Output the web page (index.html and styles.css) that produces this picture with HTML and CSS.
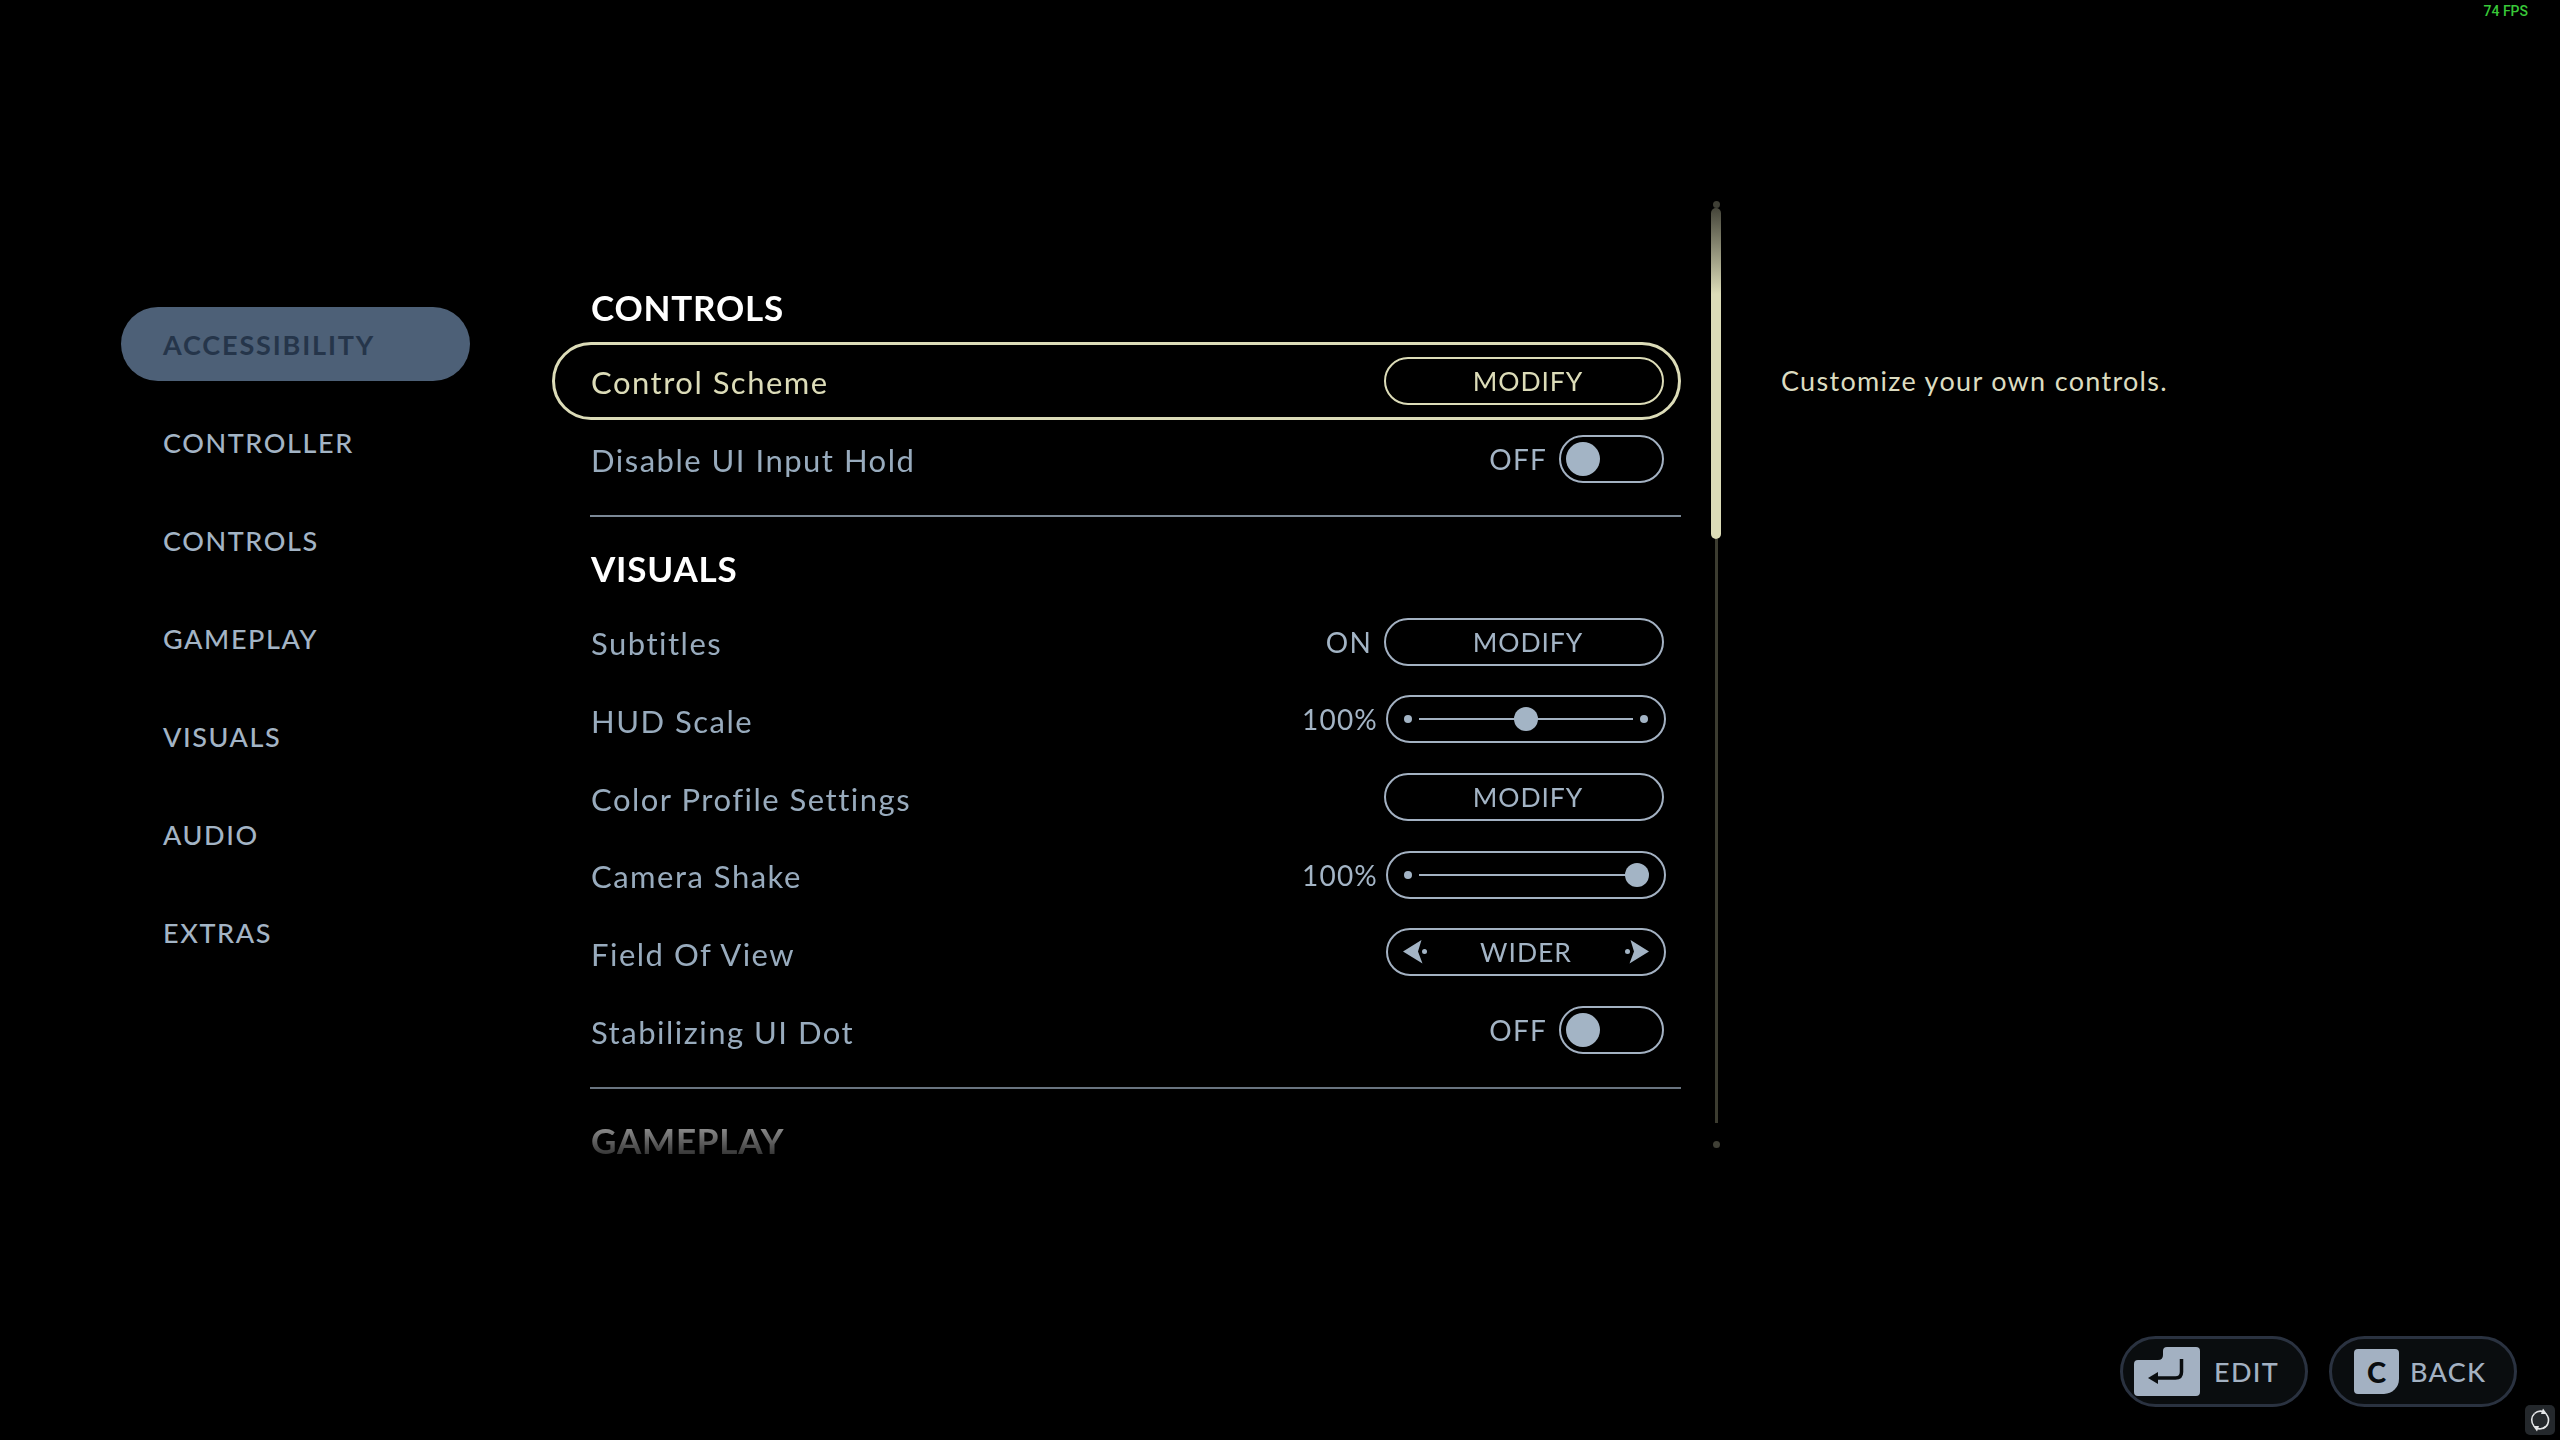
FILE: index.html
```html
<!DOCTYPE html>
<html lang="en">
<head>
<meta charset="utf-8">
<title>Settings</title>
<link rel="stylesheet" href="styles.css">
</head>
<body>
<div class="screen">
  <header class="topbar"><span class="fps">74 FPS</span></header>
  <main class="main">
    <nav class="sidebar">
      <div class="nav-item active">ACCESSIBILITY</div>
      <div class="nav-item">CONTROLLER</div>
      <div class="nav-item">CONTROLS</div>
      <div class="nav-item">GAMEPLAY</div>
      <div class="nav-item">VISUALS</div>
      <div class="nav-item">AUDIO</div>
      <div class="nav-item">EXTRAS</div>
    </nav>
    <section class="list">
      <h2 class="heading">CONTROLS</h2>
      <div class="row focus">
        <span class="label">Control Scheme</span>
        <div class="control"><div class="btn">MODIFY</div></div>
      </div>
      <div class="row">
        <span class="label">Disable UI Input Hold</span>
        <div class="control"><span class="val">OFF</span><div class="toggle"><span class="knob"></span></div></div>
      </div>
      <hr class="divider">
      <h2 class="heading">VISUALS</h2>
      <div class="row">
        <span class="label">Subtitles</span>
        <div class="control"><span class="val">ON</span><div class="btn">MODIFY</div></div>
      </div>
      <div class="row">
        <span class="label">HUD Scale</span>
        <div class="control"><span class="val">100%</span>
          <div class="slider"><span class="dot"></span><span class="track"><span class="thumb" style="left:50%"></span></span><span class="dot"></span></div>
        </div>
      </div>
      <div class="row">
        <span class="label">Color Profile Settings</span>
        <div class="control"><div class="btn">MODIFY</div></div>
      </div>
      <div class="row">
        <span class="label">Camera Shake</span>
        <div class="control"><span class="val">100%</span>
          <div class="slider"><span class="dot"></span><span class="track"><span class="thumb" style="left:102%"></span></span><span class="dot"></span></div>
        </div>
      </div>
      <div class="row">
        <span class="label">Field Of View</span>
        <div class="control">
          <div class="picker">
            <svg class="arrow" viewBox="0 0 24 24"><path d="M0 11.5 18.500 0 15 11.5 19.500 23.500Z"/><circle cx="21.5" cy="11.5" r="2.5"/></svg>
            <span class="picker-value">WIDER</span>
            <svg class="arrow" viewBox="0 0 24 24"><path d="M24 11.5 5.500 0 9 11.5 4.500 23.500Z"/><circle cx="2.500" cy="11.5" r="2.500"/></svg>
          </div>
        </div>
      </div>
      <div class="row">
        <span class="label">Stabilizing UI Dot</span>
        <div class="control"><span class="val">OFF</span><div class="toggle"><span class="knob"></span></div></div>
      </div>
      <hr class="divider">
      <h2 class="heading">GAMEPLAY</h2>
    </section>
    <aside class="scrollbar">
      <span class="end-dot"></span>
      <span class="scroll-thumb"></span>
      <span class="scroll-track"></span>
      <span class="end-dot bottom"></span>
    </aside>
    <p class="description">Customize your own controls.</p>
  </main>
  <footer class="footer">
    <div class="action">
      <svg class="enter-key" viewBox="0 0 66 49">
        <path class="key-fill" d="M33 0H62Q66 0 66 4V45Q66 49 62 49H4Q0 49 0 45V17Q0 13 4 13H24Q29 13 29 8V4Q29 0 33 0Z"/>
        <path class="key-line" d="M47.500 12V25Q47.500 31 41.500 31H22"/>
        <path class="key-head" d="M14 31 24 25V37Z"/>
      </svg>
      <span>EDIT</span>
    </div>
    <div class="action">
      <span class="c-key">C</span>
      <span>BACK</span>
    </div>
  </footer>
  <div class="sync">
    <svg viewBox="0 0 30 30"><path class="sync-line" d="M9.500 8.500A9 9 0 0 1 19 7"/><path class="sync-line" d="M21 9A9 9 0 0 1 18 23.500"/><path class="sync-line" d="M20.500 21.500A9 9 0 0 1 11 23"/><path class="sync-line" d="M9 21A9 9 0 0 1 9.500 8.500"/><path class="sync-head" d="M22 9 16 9 18 3.500Z"/><path class="sync-head" d="M8 21 14 21 12 26.500Z"/></svg>
  </div>
</div>
</body>
</html>
```
FILE: styles.css
```css
* { box-sizing: border-box; }
html, body { margin: 0; background: #000; }
.screen {
  position: relative;
  width: 2560px;
  height: 1440px;
  overflow: hidden;
  background: #000;
  display: flex;
  flex-direction: column;
  font-family: "Lato", "Liberation Sans", sans-serif;
  color: #a3b4c5;
}
.topbar {
  height: 200px;
  display: flex;
  justify-content: flex-end;
  align-items: flex-start;
  padding: 3px 32px 0 0;
}
.fps {
  font-family: "Roboto", sans-serif;
  font-size: 14px;
  line-height: 17px;
  font-weight: 500;
  color: #38c838;
}
.main {
  height: 960px;
  display: flex;
  align-items: flex-start;
  padding-left: 121px;
}
.sidebar {
  width: 349px;
  margin: 107px 82px 0 0;
  display: flex;
  flex-direction: column;
  gap: 24px;
}
.nav-item {
  height: 74px;
  border-radius: 37px;
  padding-left: 42px;
  display: flex;
  align-items: center;
  font-size: 27px;
  font-weight: 500;
  letter-spacing: 1.6px;
  color: #a3b4c5;
}
.nav-item.active {
  background: #4d6077;
  color: #25354a;
  font-weight: 700;
  letter-spacing: 1.85px;
}
.list {
  width: 1129px;
  height: 960px;
  padding-top: 74.5px;
  overflow: hidden;
  -webkit-mask-image: linear-gradient(to bottom, #000 0, #000 860px, rgba(0,0,0,.85) 888px, rgba(0,0,0,.55) 928px, rgba(0,0,0,.22) 954px, transparent 965px);
  mask-image: linear-gradient(to bottom, #000 0, #000 860px, rgba(0,0,0,.85) 888px, rgba(0,0,0,.55) 928px, rgba(0,0,0,.22) 954px, transparent 965px);
}
.heading {
  margin: 0;
  height: 67.5px;
  display: flex;
  align-items: center;
  padding: 0 0 2px 39px;
  font-size: 35px;
  font-weight: 700;
  letter-spacing: 0.8px;
  color: #fff;
}
.row {
  height: 77.7px;
  display: flex;
  align-items: center;
  justify-content: space-between;
  padding: 0 14px 0 36px;
  border: 3px solid transparent;
  border-radius: 39px;
  font-size: 31px;
}
.row.focus {
  border-color: #dcdcb8;
  color: #dcdcb8;
}
.label {
  padding-top: 3px;
  letter-spacing: 1.5px;
  color: #98abbd;
}
.focus .label { color: #dcdcb8; }
.control {
  display: flex;
  align-items: center;
  gap: 12px;
}
.val {
  font-size: 28px;
  letter-spacing: 1.2px;
}
.btn {
  width: 280px;
  height: 48px;
  border: 2px solid #a3b1c2;
  border-radius: 24px;
  display: flex;
  align-items: center;
  justify-content: center;
  padding-left: 8px;
  font-size: 26.5px;
  letter-spacing: 0.9px;
}
.focus .btn { border-color: #dcdcb8; color: #dcdcb8; }
.toggle {
  width: 105px;
  height: 48px;
  border: 2px solid #a3b1c2;
  border-radius: 24px;
  display: flex;
  align-items: center;
  padding-left: 5px;
}
.knob {
  width: 34px;
  height: 34px;
  border-radius: 50%;
  background: #a3b4c5;
}
.slider {
  width: 280px;
  height: 48px;
  margin: 0 -2px 0 -4px;
  border: 2px solid #a3b1c2;
  border-radius: 24px;
  display: flex;
  align-items: center;
  gap: 7px;
  padding: 0 16px;
}
.dot {
  width: 8px;
  height: 8px;
  border-radius: 50%;
  background: #a3b4c5;
  flex: none;
}
.track {
  position: relative;
  flex: 1;
  height: 2px;
  background: #a3b1c2;
}
.thumb {
  position: absolute;
  top: 50%;
  width: 24px;
  height: 24px;
  border-radius: 50%;
  background: #a3b4c5;
  transform: translate(-50%, -50%);
}
.picker {
  width: 280px;
  height: 48px;
  margin: 0 -2px 0 0;
  border: 2px solid #a3b1c2;
  border-radius: 24px;
  display: flex;
  align-items: center;
  justify-content: space-between;
  padding: 0 15px;
  font-size: 26.5px;
  letter-spacing: 1px;
}
.arrow {
  width: 24px;
  height: 24px;
  fill: #a3b4c5;
}
.divider {
  margin: 18px 0 18px 38px;
  height: 2px;
  border: 0;
  background: #7b8896;
}
.scrollbar {
  position: relative;
  width: 10px;
  height: 960px;
  margin-left: 30px;
  padding-top: 8px;
  display: flex;
  flex-direction: column;
  align-items: center;
}
.end-dot {
  position: absolute;
  top: 1px;
  width: 7px;
  height: 7px;
  border-radius: 50%;
  background: #3f3f35;
}
.end-dot.bottom { top: 941px; }
.scroll-thumb {
  width: 10px;
  height: 331px;
  flex: none;
  border-radius: 5px;
  background: linear-gradient(to bottom, #45453a 0, #dcdcb8 26%, #dcdcb8 100%);
}
.scroll-track {
  width: 3px;
  height: 584px;
  flex: none;
  background: #3c3c30;
}
.description {
  margin: 162px 0 0 60px;
  font-size: 27px;
  line-height: 38px;
  letter-spacing: 1.3px;
  color: #dcdcc0;
}
.footer {
  margin-top: 176px;
  display: flex;
  justify-content: flex-end;
  gap: 21px;
  padding-right: 43px;
}
.action {
  width: 188px;
  height: 71px;
  background: #0a0d0f;
  border: 3px solid #2a3240;
  border-radius: 36px;
  display: flex;
  align-items: center;
  font-size: 27px;
  font-weight: 500;
  letter-spacing: 1.3px;
  color: #a3b1c2;
}
.enter-key {
  width: 66px;
  height: 49px;
  margin: 0 14px 0 11px;
}
.key-fill { fill: #a3b1c2; }
.key-line { fill: none; stroke: #0a0d0f; stroke-width: 3.5px; }
.key-head { fill: #0a0d0f; }
.c-key {
  width: 45px;
  height: 45px;
  margin: 0 11px 0 22px;
  background: #a3b1c2;
  border-radius: 4px 4px 15px 4px;
  display: flex;
  align-items: center;
  justify-content: center;
  font-size: 29px;
  font-weight: 900;
  letter-spacing: 0;
  color: #0a0d0f;
}
.sync {
  position: absolute;
  left: 2525px;
  top: 1405px;
  width: 30px;
  height: 30px;
  border-radius: 5px;
  background: #24282c;
}
.sync svg { display: block; width: 30px; height: 30px; }
.sync-line { fill: none; stroke: #e4e6e8; stroke-width: 1.6px; }
.sync-head { fill: #e4e6e8; }
```
